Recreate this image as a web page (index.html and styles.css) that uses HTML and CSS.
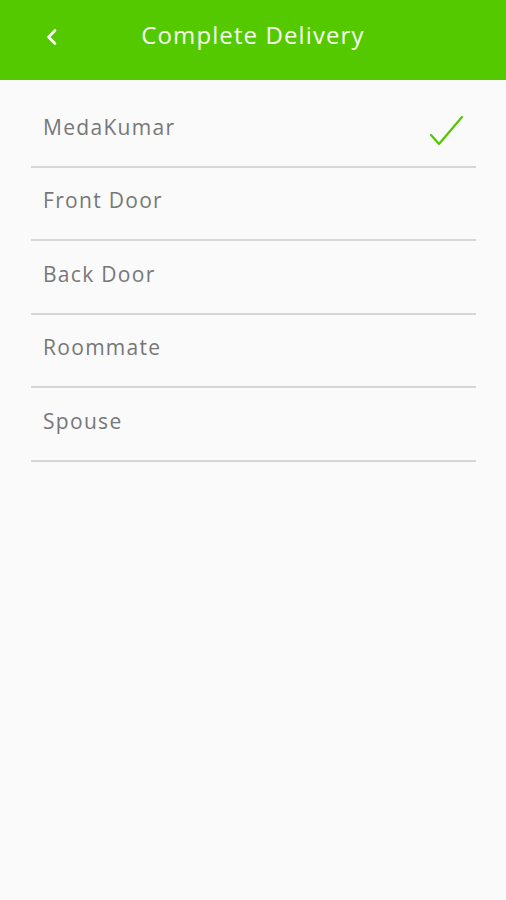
FILE: index.html
```html
<!DOCTYPE html>
<html lang="en">

<head>
    <meta charset="UTF-8">
    <meta name="viewport" content="width=device-width, initial-scale=1.0">
    <title>Complete Delivery</title>
    <link rel="stylesheet" href="styles.css">
</head>

<body>
    <header class="topbar">
        <button class="back" aria-label="Back">
            <svg width="14" height="20" viewBox="0 0 14 20">
                <path d="M10 3.5 L3.5 10 L10 16.5" fill="none" stroke="#fff" stroke-width="2.6" stroke-linecap="round" stroke-linejoin="round"/>
            </svg>
        </button>
        <h1>Complete Delivery</h1>
    </header>
    <ul class="options">
        <li class="option selected">
            <span>MedaKumar</span>
            <svg class="check" width="36" height="34" viewBox="0 0 36 34">
                <path d="M2 19 L10 28 L33 1" fill="none" stroke="#55c500" stroke-width="2.2" stroke-linecap="round" stroke-linejoin="round"/>
            </svg>
        </li>
        <li class="option"><span>Front Door</span></li>
        <li class="option"><span>Back Door</span></li>
        <li class="option"><span>Roommate</span></li>
        <li class="option"><span>Spouse</span></li>
    </ul>
</body>

</html>
```

FILE: styles.css
```css
html,
body {
    margin: 0;
    padding: 0;
    background: #fafafa;
    font-family: 'Open Sans', 'Noto Sans', Arial, sans-serif;
}

.topbar {
    position: relative;
    height: 80px;
    background: #55c900;
    display: flex;
    align-items: center;
    justify-content: center;
}

.topbar h1 {
    margin: 0;
    margin-top: -12px;
    color: #f4fff0;
    font-size: 24px;
    font-weight: 400;
    letter-spacing: 1.1px;
}

.back {
    position: absolute;
    left: 45px;
    top: 27px;
    padding: 0;
    border: 0;
    background: none;
    display: flex;
}

.options {
    list-style: none;
    margin: 0 30px 0 31px;
    padding: 14px 0 0;
}

.option {
    box-sizing: content-box;
    height: 65.5px;
    padding: 0 11px 6px 12px;
    border-bottom: 2px solid #d6d6d6;
    display: flex;
    align-items: center;
    justify-content: space-between;
    color: #777;
    font-size: 21px;
    letter-spacing: 1.3px;
}

.check {
    margin-top: 12px;
}
```
